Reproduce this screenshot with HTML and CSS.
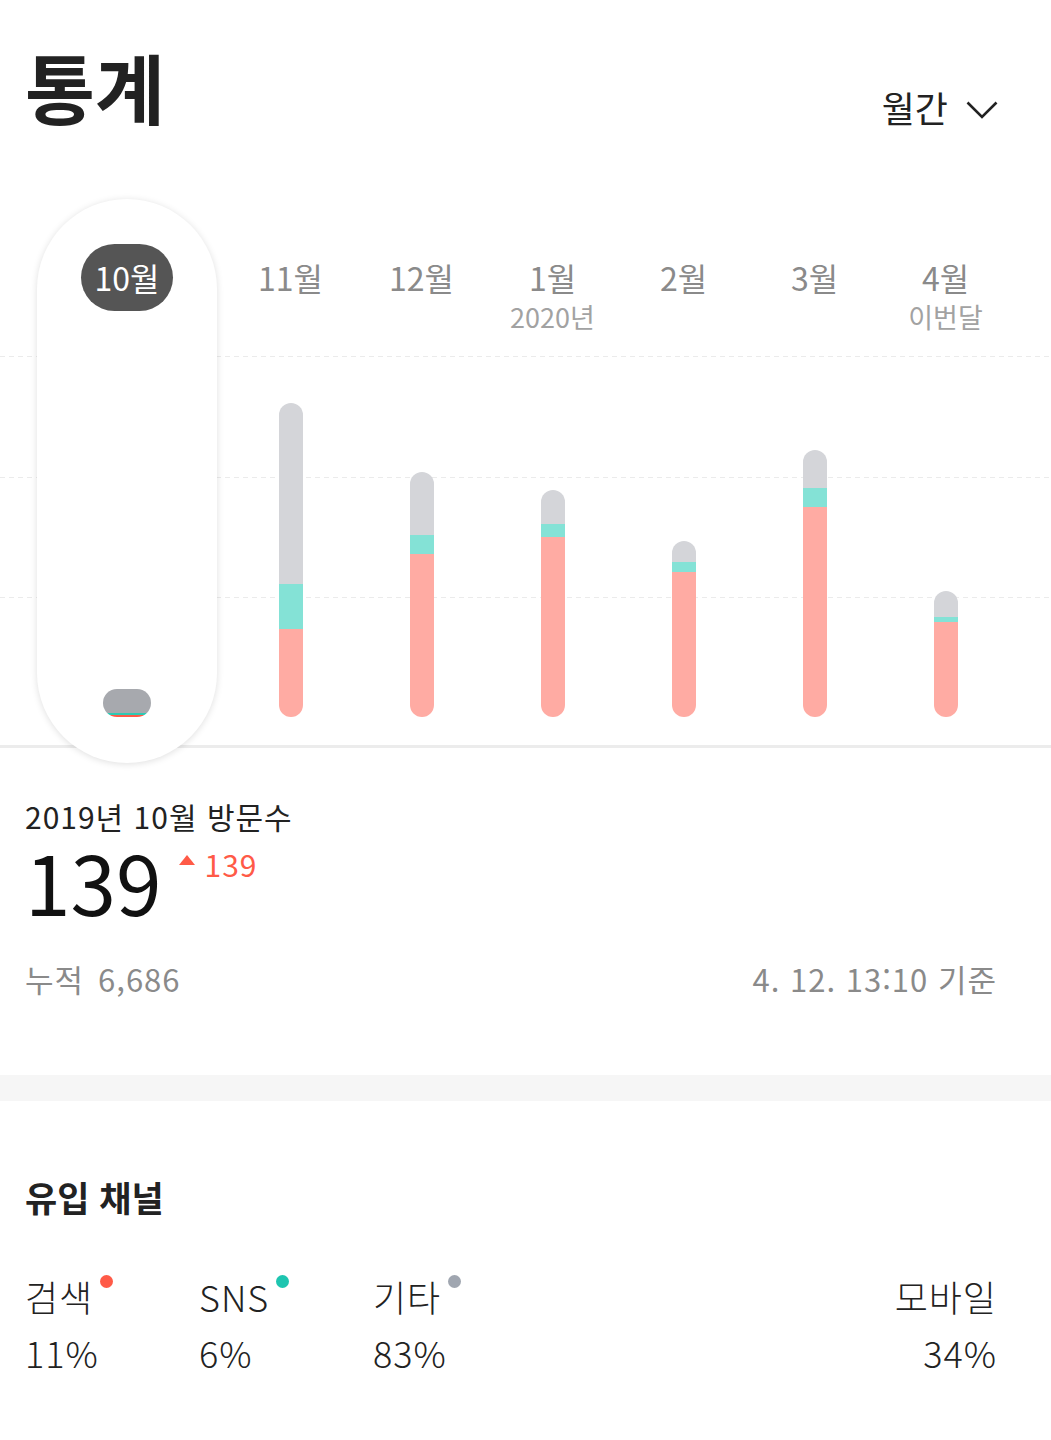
FILE: index.html
```html
<!DOCTYPE html>
<html lang="ko">

<head>
  <meta charset="UTF-8" />
  <title>통계</title>
  <link rel="stylesheet" href="styles.css">
</head>

<body>
  <main class="page">
    <!-- 상단 제목 -->
    <header class="top">
      <h1 class="title">통계</h1>
      <button class="period" type="button">
        월간
        <svg class="chev" width="32" height="18" viewBox="0 0 32 18">
          <path d="M1.5 1.5 L16 16 L30.5 1.5" fill="none" stroke="#222" stroke-width="2.6" />
        </svg>
      </button>
    </header>

    <!-- 월별 그래프 -->
    <section class="chart">
      <div class="grid"><i></i><i></i><i></i></div>

      <div class="col col-on">
        <div class="label"><span class="month">10월</span></div>
        <div class="plot">
          <div class="bar bar-on">
            <span class="seg etc" style="height:24px"></span>
            <span class="seg sns" style="height:2px"></span>
            <span class="seg search" style="height:2px"></span>
          </div>
        </div>
      </div>

      <div class="col">
        <div class="label"><span class="month">11월</span></div>
        <div class="plot">
          <div class="bar">
            <span class="seg etc" style="height:181px"></span>
            <span class="seg sns" style="height:45px"></span>
            <span class="seg search" style="height:88px"></span>
          </div>
        </div>
      </div>

      <div class="col">
        <div class="label"><span class="month">12월</span></div>
        <div class="plot">
          <div class="bar">
            <span class="seg etc" style="height:63px"></span>
            <span class="seg sns" style="height:19px"></span>
            <span class="seg search" style="height:163px"></span>
          </div>
        </div>
      </div>

      <div class="col">
        <div class="label"><span class="month">1월</span><span class="sub">2020년</span></div>
        <div class="plot">
          <div class="bar">
            <span class="seg etc" style="height:34px"></span>
            <span class="seg sns" style="height:13px"></span>
            <span class="seg search" style="height:180px"></span>
          </div>
        </div>
      </div>

      <div class="col">
        <div class="label"><span class="month">2월</span></div>
        <div class="plot">
          <div class="bar">
            <span class="seg etc" style="height:21px"></span>
            <span class="seg sns" style="height:10px"></span>
            <span class="seg search" style="height:145px"></span>
          </div>
        </div>
      </div>

      <div class="col">
        <div class="label"><span class="month">3월</span></div>
        <div class="plot">
          <div class="bar">
            <span class="seg etc" style="height:38px"></span>
            <span class="seg sns" style="height:19px"></span>
            <span class="seg search" style="height:210px"></span>
          </div>
        </div>
      </div>

      <div class="col">
        <div class="label"><span class="month">4월</span><span class="sub">이번달</span></div>
        <div class="plot">
          <div class="bar">
            <span class="seg etc" style="height:26px"></span>
            <span class="seg sns" style="height:5px"></span>
            <span class="seg search" style="height:95px"></span>
          </div>
        </div>
      </div>
    </section>

    <!-- 방문수 요약 -->
    <section class="summary">
      <h2 class="sum-title">2019년 10월 방문수</h2>
      <div class="count">
        <strong class="count-num">139</strong>
        <span class="diff">
          <svg class="tri" width="16" height="10" viewBox="0 0 16 10">
            <path d="M8 0 L16 10 L0 10 Z" fill="#ff5a47" />
          </svg>139</span>
      </div>
      <div class="meta">
        <span>누적<span class="total">6,686</span></span>
        <span>4. 12. 13:10 기준</span>
      </div>
    </section>

    <div class="band"></div>

    <!-- 유입 채널 -->
    <section class="channel">
      <h2 class="ch-title">유입 채널</h2>
      <ul class="ch-list">
        <li class="ch">
          <div class="ch-name">검색<i class="dot dot-search"></i></div>
          <div class="ch-val">11%</div>
        </li>
        <li class="ch">
          <div class="ch-name">SNS<i class="dot dot-sns"></i></div>
          <div class="ch-val">6%</div>
        </li>
        <li class="ch">
          <div class="ch-name">기타<i class="dot dot-etc"></i></div>
          <div class="ch-val">83%</div>
        </li>
        <li class="ch ch-mobile">
          <div class="ch-name">모바일</div>
          <div class="ch-val">34%</div>
        </li>
      </ul>
    </section>
  </main>
</body>

</html>
```

FILE: styles.css
```css
/* 초기화 */
html,
body,
h1,
h2,
ul {
  margin: 0;
  padding: 0;
}

ul {
  list-style: none;
}

body {
  background-color: #fff;
  color: #222;
  font-family: "Noto Sans CJK KR", "Noto Sans", sans-serif;
}

/* 상단 제목 */
.top {
  display: flex;
  justify-content: space-between;
  align-items: flex-start;
  padding: 48px 53px 0 25px;
}

.title {
  font-size: 76px;
  line-height: 76px;
  font-weight: 700;
  color: #222;
}

.period {
  display: flex;
  align-items: center;
  margin-top: 39px;
  padding: 0;
  border: 0;
  background: none;
  font-family: inherit;
  font-size: 36px;
  line-height: 40px;
  color: #222;
}

.chev {
  margin-left: 18px;
  margin-top: 6px;
}

/* 월별 그래프 */
.chart {
  position: relative;
  display: flex;
  margin-top: 72px;
  padding-left: 37px;
  border-bottom: 3px solid #ececec;
}

/* 점선 눈금 */
.grid {
  position: absolute;
  top: 157px;
  left: 0;
  right: 0;
  height: 242px;
  display: flex;
  flex-direction: column;
  justify-content: space-between;
}

.grid i {
  display: block;
  height: 1px;
  background-image: linear-gradient(to right, #ebebeb 5px, transparent 5px);
  background-size: 9px 1px;
}

.col {
  position: relative;
  display: flex;
  flex-direction: column;
  width: 131px;
  padding-bottom: 28px;
}

/* 선택된 달 카드 */
.col-on {
  z-index: 1;
  width: 180px;
  margin-right: 8px;
  margin-bottom: -18px;
  padding-bottom: 46px;
  background-color: #fff;
  border-radius: 90px;
  box-shadow: 0 1px 7px rgba(0, 0, 0, .13);
}

.label {
  display: flex;
  flex-direction: column;
  align-items: center;
  box-sizing: border-box;
  height: 157px;
  padding-top: 45px;
}

.month {
  font-size: 32px;
  line-height: 67px;
  color: #8a8a8a;
}

.col-on .month {
  width: 92px;
  border-radius: 34px;
  background-color: #555;
  color: #fff;
  text-align: center;
}

.sub {
  margin-top: -9px;
  font-size: 27px;
  line-height: 30px;
  color: #a2a2a2;
}

.plot {
  display: flex;
  justify-content: center;
  align-items: flex-end;
  height: 361px;
}

.bar {
  display: flex;
  flex-direction: column;
  width: 24px;
  border-radius: 12px;
  overflow: hidden;
}

.seg {
  display: block;
}

.etc {
  background-color: #d4d5d9;
}

.sns {
  background-color: #84e2d6;
}

.search {
  background-color: #ffaba3;
}

.bar-on {
  width: 48px;
  border-radius: 14px;
}

.bar-on .etc {
  background-color: #a7a9ae;
}

.bar-on .sns {
  background-color: #2ec9b4;
}

.bar-on .search {
  background-color: #ff5a47;
}

/* 방문수 요약 */
.summary {
  padding: 48px 54px 0 25px;
}

.sum-title {
  font-size: 30px;
  line-height: 40px;
  font-weight: 400;
  letter-spacing: 1px;
  color: #222;
}

.count {
  display: flex;
  align-items: flex-start;
}

.count-num {
  font-size: 82px;
  line-height: 90px;
  font-weight: 400;
  color: #111;
}

.diff {
  display: flex;
  align-items: center;
  margin: 13px 0 0 17px;
  font-size: 30px;
  line-height: 30px;
  letter-spacing: 1px;
  color: #ff5a47;
}

.tri {
  margin: 0 10px 8px 0;
}

.meta {
  display: flex;
  justify-content: space-between;
  margin-top: 33px;
  font-size: 31px;
  line-height: 40px;
  letter-spacing: 1px;
  color: #8a8a8a;
}

.total {
  margin-left: 14px;
}

/* 구분 띠 */
.band {
  height: 26px;
  margin-top: 76px;
  background-color: #f6f6f6;
}

/* 유입 채널 */
.channel {
  padding: 74px 54px 60px 25px;
}

.ch-title {
  font-size: 35px;
  line-height: 44px;
  font-weight: 700;
  color: #222;
}

.ch-list {
  display: flex;
  margin-top: 49px;
}

.ch {
  width: 174px;
  font-size: 36px;
  line-height: 56px;
  font-weight: 300;
  letter-spacing: 1px;
  color: #222;
}

.ch-mobile {
  margin-left: auto;
  width: auto;
  text-align: right;
}

.dot {
  display: inline-block;
  vertical-align: top;
  width: 13px;
  height: 13px;
  margin: 7px 0 0 7px;
  border-radius: 50%;
}

.dot-search {
  background-color: #ff5a47;
}

.dot-sns {
  background-color: #1ec5b0;
}

.dot-etc {
  background-color: #a0a6b0;
}
```
